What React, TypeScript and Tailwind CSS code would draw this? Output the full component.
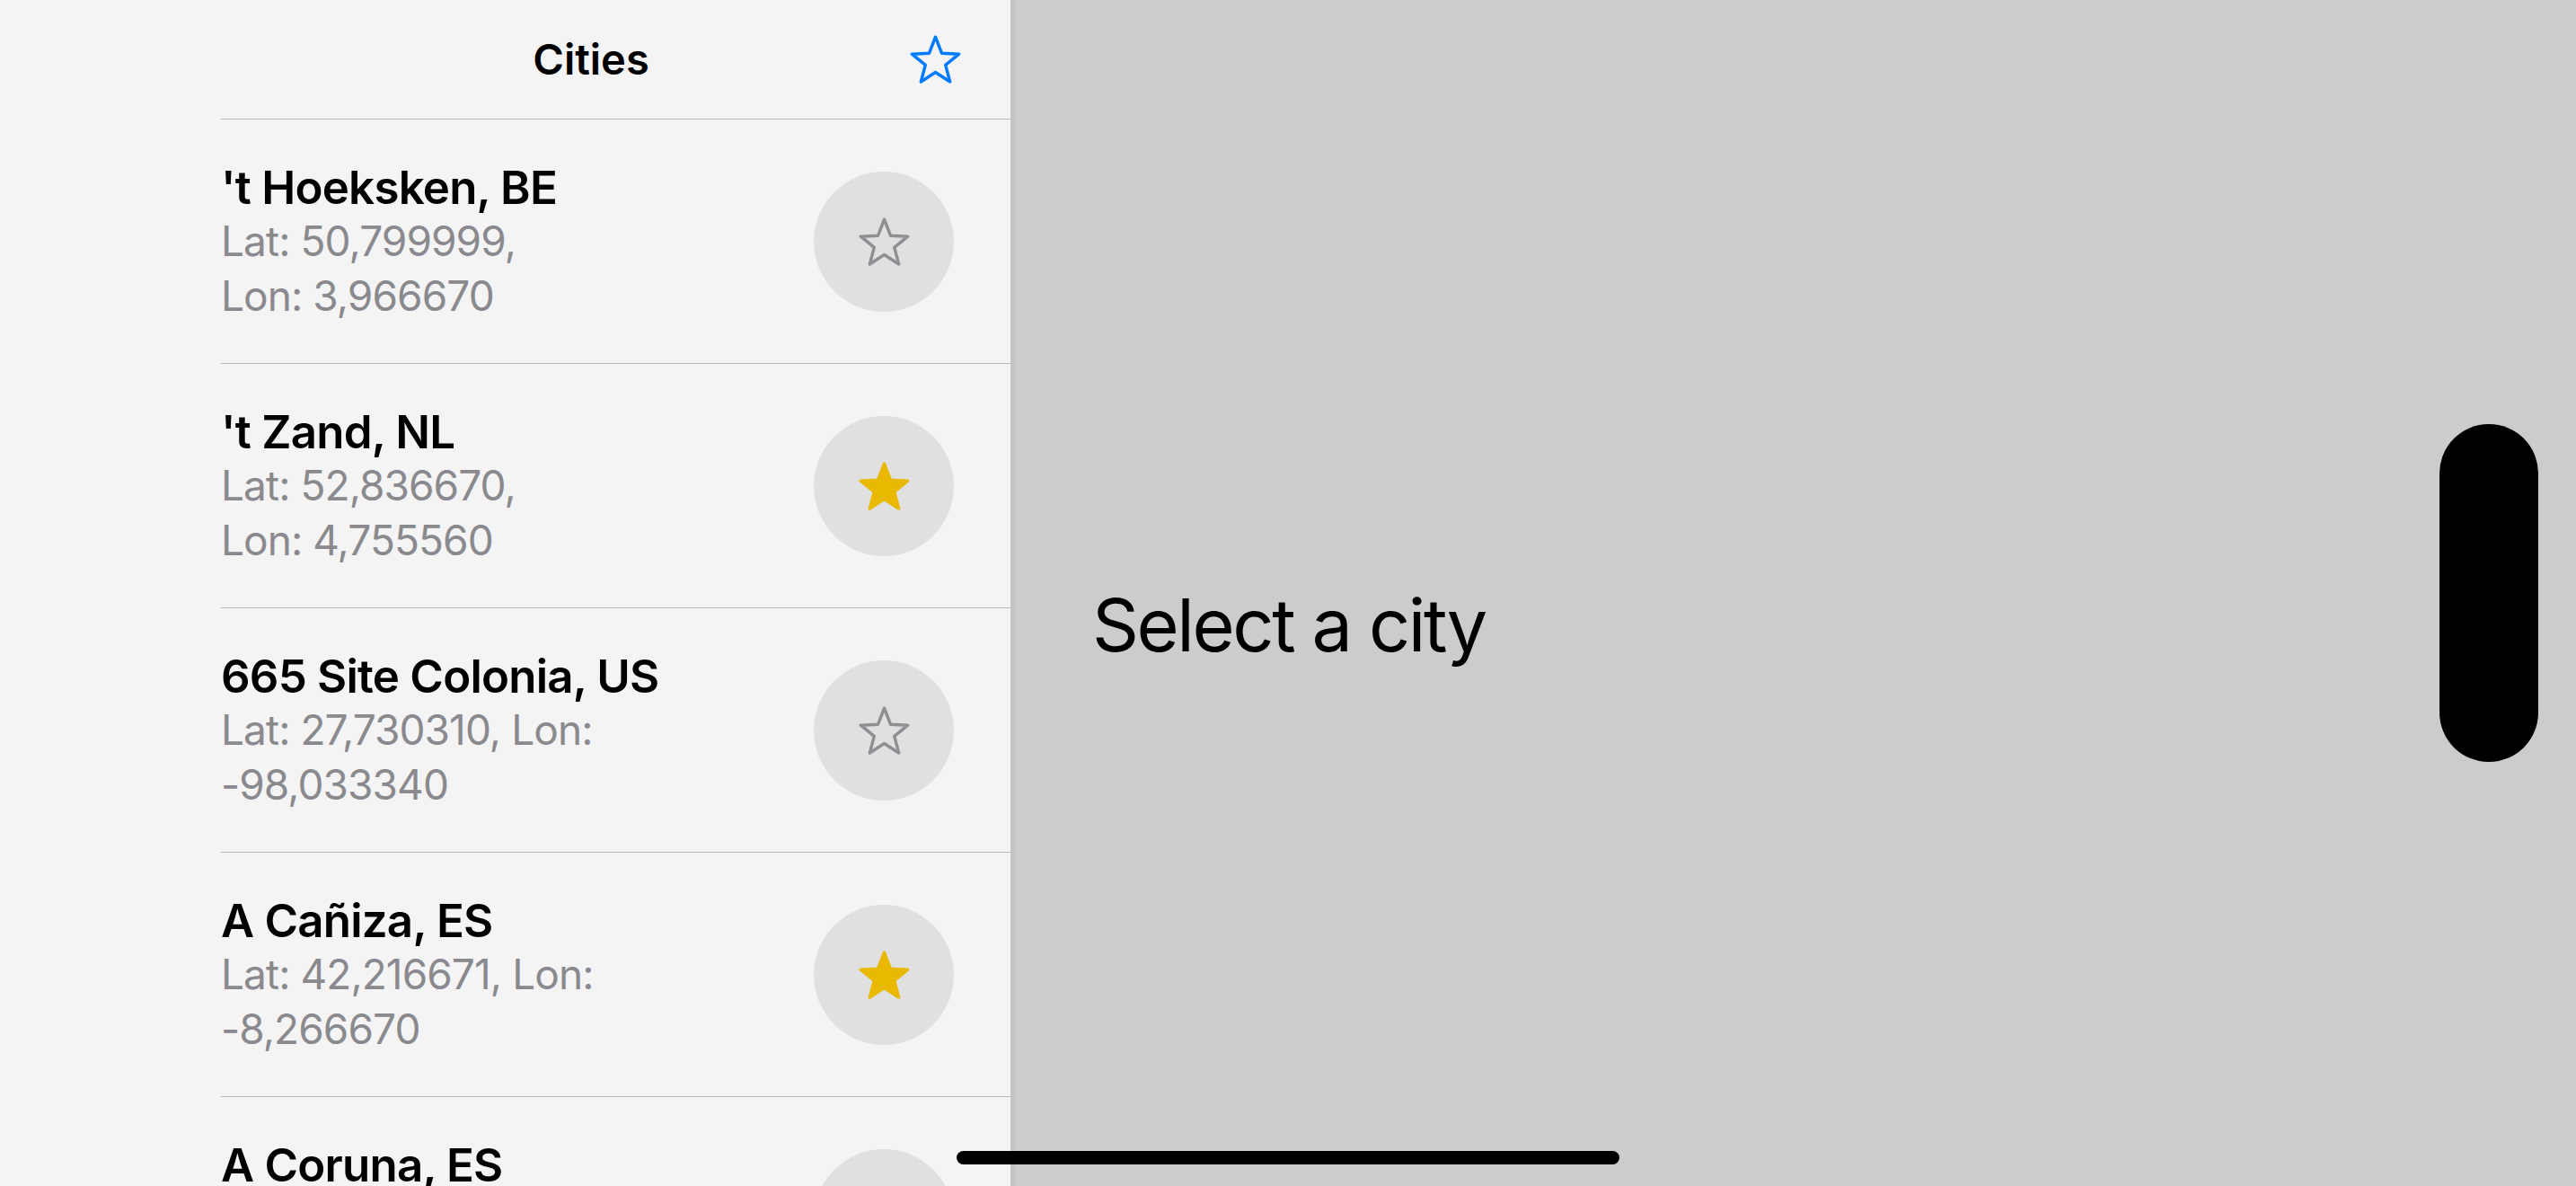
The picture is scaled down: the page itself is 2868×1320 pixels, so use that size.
const cities = [
  { name: "'t Hoeksken, BE", lines: ['Lat: 50,799999,', 'Lon: 3,966670'], favorite: false },
  { name: "'t Zand, NL", lines: ['Lat: 52,836670,', 'Lon: 4,755560'], favorite: true },
  { name: '665 Site Colonia, US', lines: ['Lat: 27,730310, Lon:', '-98,033340'], favorite: false },
  { name: 'A Cañiza, ES', lines: ['Lat: 42,216671, Lon:', '-8,266670'], favorite: true },
  { name: 'A Coruna, ES', lines: ['Lat: 43,371350, Lon:', '-8,396000'], favorite: false },
];

const STAR =
  'M0 -28 L7.05 -9.71 L26.63 -8.65 L11.41 3.71 L16.46 22.65 L0 12 L-16.46 22.65 L-11.41 3.71 L-26.63 -8.65 L-7.05 -9.71 Z';

function Star({ filled, color, className }: { filled: boolean; color: string; className: string }) {
  return (
    <svg viewBox="-29 -30 58 54.5" className={className}>
      <path
        d={STAR}
        fill={filled ? color : 'none'}
        stroke={color}
        strokeWidth={3.5}
        strokeLinejoin="round"
      />
    </svg>
  );
}

export default function App() {
  return (
    <div className="relative flex h-[1320px] w-[2868px] overflow-hidden bg-[#cccccc] font-['Inter','Liberation_Sans',sans-serif] text-black">
      <aside className="flex w-[1130px] shrink-0 flex-col border-r-[5px] border-[#c5c5c5] bg-[#f4f4f4]">
        <header className="ml-[246px] grid h-[133px] shrink-0 grid-cols-[1fr_auto_1fr] items-center border-b border-[#b9b9b9] pr-[55px]">
          <div />
          <h1 className="text-[47px] font-semibold">Cities</h1>
          <div className="flex justify-end">
            <Star filled={false} color="#007aff" className="h-[54px] w-[57px]" />
          </div>
        </header>
        {cities.map((city) => (
          <div
            key={city.name}
            className="ml-[246px] flex h-[272px] shrink-0 items-center justify-between border-b border-[#b9b9b9] pr-[63px]"
          >
            <div className="flex flex-col pt-[3px]">
              <p className="text-[51px] leading-[58px] font-semibold tracking-[-0.015em]">{city.name}</p>
              {city.lines.map((line) => (
                <p key={line} className="text-[46px] leading-[61px] tracking-[-0.02em] text-[#8a8a8e]">
                  {line}
                </p>
              ))}
            </div>
            <button className="flex h-[156px] w-[156px] items-center justify-center rounded-full bg-[#e0e0e0]">
              <Star
                filled={city.favorite}
                color={city.favorite ? '#e9b800' : '#8e8e93'}
                className="h-[54px] w-[57px]"
              />
            </button>
          </div>
        ))}
      </aside>
      <main className="flex-1 pl-[86px] pt-[656px]">
        <p className="text-[81px] leading-[81px] tracking-[-0.03em]">Select a city</p>
      </main>
      <div className="absolute left-[2716px] top-[472px] h-[376px] w-[110px] rounded-full bg-black" />
      <div className="absolute left-[1065px] top-[1281px] h-[15px] w-[738px] rounded-full bg-black" />
    </div>
  );
}
